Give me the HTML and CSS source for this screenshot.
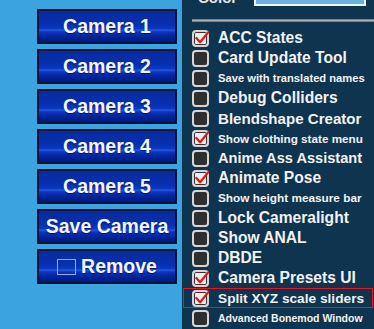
FILE: index.html
```html
<!DOCTYPE html>
<html lang="en">
<head>
    <meta charset="UTF-8">
    <title>Camera Presets</title>
    <link rel="stylesheet" href="styles.css">
</head>
<body>
    <div class="presets">
        <button class="preset-btn">Camera 1</button>
        <button class="preset-btn">Camera 2</button>
        <button class="preset-btn">Camera 3</button>
        <button class="preset-btn">Camera 4</button>
        <button class="preset-btn">Camera 5</button>
        <button class="preset-btn">Save Camera</button>
        <button class="preset-btn"><span class="remove-box"></span>Remove</button>
    </div>

    <div class="plugin-panel">
        <div class="color-row">
            <span class="color-label">Color</span>
            <span class="color-swatch"></span>
        </div>
        <div class="separator"></div>

        <ul class="toggle-list">
            <li class="toggle checked"><span class="box"><svg viewBox="0 0 18 18"><path d="M3.5 8.5 L7.5 13 L16 2.5"/></svg></span><span class="label">ACC States</span></li>
            <li class="toggle"><span class="box"></span><span class="label">Card Update Tool</span></li>
            <li class="toggle"><span class="box"></span><span class="label small">Save with translated names</span></li>
            <li class="toggle"><span class="box"></span><span class="label">Debug Colliders</span></li>
            <li class="toggle"><span class="box"></span><span class="label fit-a">Blendshape Creator</span></li>
            <li class="toggle checked"><span class="box"><svg viewBox="0 0 18 18"><path d="M3.5 8.5 L7.5 13 L16 2.5"/></svg></span><span class="label small fit-s1">Show clothing state menu</span></li>
            <li class="toggle"><span class="box"></span><span class="label fit-b">Anime Ass Assistant</span></li>
            <li class="toggle checked"><span class="box"><svg viewBox="0 0 18 18"><path d="M3.5 8.5 L7.5 13 L16 2.5"/></svg></span><span class="label">Animate Pose</span></li>
            <li class="toggle"><span class="box"></span><span class="label small fit-s2">Show height measure bar</span></li>
            <li class="toggle"><span class="box"></span><span class="label">Lock Cameralight</span></li>
            <li class="toggle"><span class="box"></span><span class="label">Show ANAL</span></li>
            <li class="toggle"><span class="box"></span><span class="label">DBDE</span></li>
            <li class="toggle checked"><span class="box"><svg viewBox="0 0 18 18"><path d="M3.5 8.5 L7.5 13 L16 2.5"/></svg></span><span class="label">Camera Presets UI</span></li>
            <li class="toggle checked highlighted"><span class="box"><svg viewBox="0 0 18 18"><path d="M3.5 8.5 L7.5 13 L16 2.5"/></svg></span><span class="label fit-c">Split XYZ scale sliders</span></li>
            <li class="toggle"><span class="box"></span><span class="label small fit-s3">Advanced Bonemod Window</span></li>
        </ul>
    </div>
</body>
</html>
```

FILE: styles.css
```css
* {
    margin: 0;
    padding: 0;
    box-sizing: border-box;
}

:root {
    --sky: #3ba4de;
    --panel-bg: #0f3450;
    --text-color: #f2f2f2;
    --check-red: #e8141c;
}

body {
    width: 374px;
    height: 329px;
    overflow: hidden;
    display: flex;
    font-family: 'Liberation Sans', Arial, sans-serif;
    background: var(--sky);
}

/* left column of camera buttons */
.presets {
    flex: none;
    width: 182px;
    padding: 9px 0 0 37px;
    display: flex;
    flex-direction: column;
    gap: 5px;
}

.preset-btn {
    width: 140px;
    height: 35px;
    display: flex;
    align-items: center;
    justify-content: center;
    border: 2px solid #051238;
    background: linear-gradient(to bottom,
        #0a2a9c 0%,
        #0631b2 45%,
        #0a38c0 56%,
        #2456dc 62%,
        #0a34b8 68%,
        #02229a 85%,
        #011a78 100%);
    color: #f4f6ff;
    font-family: 'Liberation Sans', Arial, sans-serif;
    font-weight: bold;
    font-size: 19.5px;
    text-shadow: 0 1px 1px rgba(0, 0, 30, 0.6);
    cursor: pointer;
}

.remove-box {
    width: 19px;
    height: 16px;
    margin-right: 5px;
    border: 1px solid #94aae8;
}

/* right plugin panel */
.plugin-panel {
    flex: 1;
    min-width: 0;
    overflow: hidden;
    background: var(--panel-bg);
    color: var(--text-color);
    font-family: 'Liberation Sans', Arial, sans-serif;
    font-weight: bold;
}

.color-row {
    height: 20px;
    margin-top: -14px;
    display: flex;
    align-items: flex-end;
    padding-left: 16px;
}

.color-label {
    font-size: 15px;
    line-height: 17px;
    color: #e6e6e6;
    width: 56px;
}

.color-swatch {
    width: 112px;
    height: 20px;
    background: #6ab4dc;
    border: 2px solid #f4f4f4;
}

.separator {
    height: 3px;
    margin: 13px 0 6px 10px;
    background: linear-gradient(to bottom, #56646e, #b4b4b4 50%, #56646e);
}

.toggle-list {
    list-style: none;
}

.toggle {
    height: 20px;
    margin: 0 1px;
    padding-left: 9px;
    display: flex;
    align-items: center;
    gap: 9px;
}

.toggle.highlighted {
    box-shadow: inset 0 0 0 1px var(--check-red);
}

.box {
    flex: none;
    position: relative;
    width: 17px;
    height: 17px;
    border: 2px solid #d6d6d6;
    border-radius: 4px;
    background: #2e2e2e;
}

.toggle.checked .box {
    background: #ededed;
    box-shadow: inset 0 0 0 1px #333;
}

.box svg {
    position: absolute;
    left: -1px;
    top: -2px;
    width: 17px;
    height: 17px;
}

.box path {
    fill: none;
    stroke: var(--check-red);
    stroke-width: 2.4;
    stroke-linecap: round;
    stroke-linejoin: round;
}

.label {
    font-size: 15.6px;
    white-space: nowrap;
}

.label.fit-a { font-size: 15.1px; }
.label.fit-b { font-size: 14.6px; }
.label.fit-c { font-size: 13.7px; }

.label.small { font-size: 11.2px; }
.label.fit-s1 { font-size: 11.7px; }
.label.fit-s2 { font-size: 11.8px; }
.label.fit-s3 { font-size: 10.5px; }
```
